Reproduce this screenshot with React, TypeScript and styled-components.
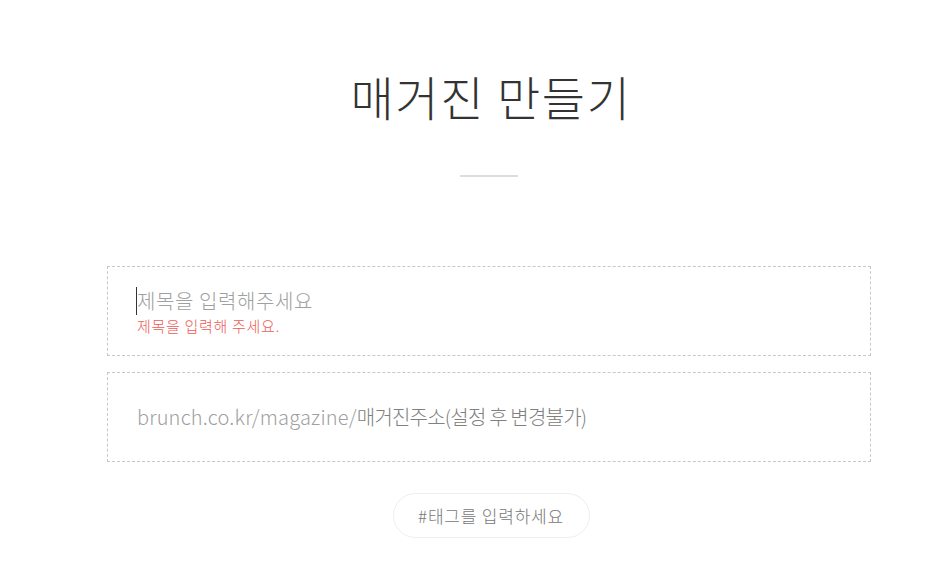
import styled, { createGlobalStyle } from 'styled-components'

const GlobalStyle = createGlobalStyle`
  html, body {
    margin: 0;
    padding: 0;
    background: #fff;
    font-family: 'Noto Sans CJK KR', 'Noto Sans', sans-serif;
    overflow: hidden;
  }
`

const Page = styled.div`
  width: 764px;
  margin-left: 107px;
  display: flex;
  flex-direction: column;
  align-items: center;
`

const Title = styled.h1`
  margin: 63px 0 0;
  font-size: 47px;
  font-weight: 300;
  line-height: 66px;
  color: #333;
  letter-spacing: 1.6px;
  padding-left: 4px;
`

const Divider = styled.div`
  width: 58px;
  height: 2px;
  margin-top: 46px;
  background: #ddd;
`

const Field = styled.div<{ $first?: boolean }>`
  box-sizing: border-box;
  width: 100%;
  height: 90px;
  margin-top: ${(p) => (p.$first ? '89px' : '16px')};
  border: 1px dashed #c8c8c8;
  padding: 0 29px;
  display: flex;
  flex-direction: column;
  justify-content: center;
`

const Placeholder = styled.div<{ $caret?: boolean }>`
  font-size: 20px;
  line-height: 28px;
  font-weight: 300;
  letter-spacing: ${(p) => (p.$caret ? '0.6px' : '0.2px')};
  color: #a0a0a0;
  border-left: ${(p) => (p.$caret ? '1px solid #333' : 'none')};
  margin-left: ${(p) => (p.$caret ? '-1px' : '0')};
  width: fit-content;
`

const Dark = styled.span`
  color: #808080;
  letter-spacing: -0.8px;
`

const ErrorText = styled.div`
  font-size: 15px;
  line-height: 20px;
  letter-spacing: 0.7px;
  font-weight: 300;
  color: #ee5a55;
  margin-top: 1px;
`

const TagPill = styled.div`
  margin-top: 31px;
  width: 197px;
  height: 45px;
  box-sizing: border-box;
  border: 1px solid #eee;
  border-radius: 23px;
  display: flex;
  align-items: center;
  justify-content: center;
  font-size: 17px;
  font-weight: 300;
  letter-spacing: 0.8px;
  color: #777;
  margin-left: 4px;
`

export default function App() {
  return (
    <>
      <GlobalStyle />
      <Page>
        <Title>매거진 만들기</Title>
        <Divider />
        <Field $first>
          <Placeholder $caret>제목을 입력해주세요</Placeholder>
          <ErrorText>제목을 입력해 주세요.</ErrorText>
        </Field>
        <Field>
          <Placeholder>
            brunch.co.kr/magazine/<Dark>매거진주소(설정 후 변경불가)</Dark>
          </Placeholder>
        </Field>
        <TagPill>#태그를 입력하세요</TagPill>
      </Page>
    </>
  )
}
